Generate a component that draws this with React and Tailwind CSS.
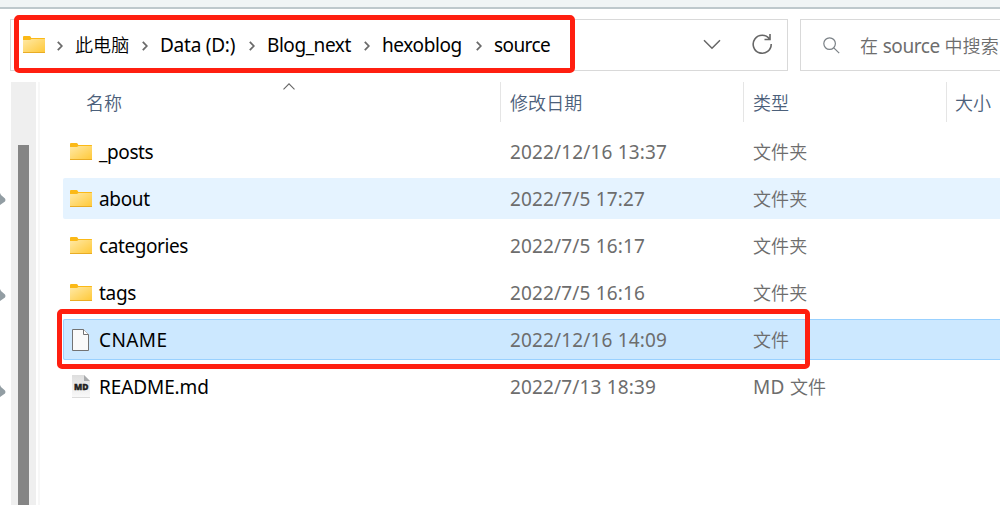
import React from "react";

const CJK = "text-[18px] font-[350] tracking-[0.1px] font-['Noto_Sans_CJK_SC_DemiLight','Noto_Sans_CJK_SC',sans-serif]";

function Label({ text, className = "" }) {
  const parts = text.split(/([\u4e00-\u9fff]+)/).filter(Boolean);
  return (
    <span className={`block whitespace-pre leading-[26px] ${className}`}>
      {parts.map((part, i) =>
        /[\u4e00-\u9fff]/.test(part) ? (
          <span key={i} className={CJK}>{part}</span>
        ) : (
          <span key={i}>{part}</span>
        )
      )}
    </span>
  );
}

function Folder() {
  return (
    <svg width="22" height="17" viewBox="0 0 22 17" className="block shrink-0">
      <defs>
        <linearGradient id="folder" x1="0" y1="0" x2="1" y2="1">
          <stop offset="0" stopColor="#ffe9a6" />
          <stop offset="1" stopColor="#ffc836" />
        </linearGradient>
      </defs>
      <path d="M0 1Q0 0 1 0H6.5Q7.3 0 7.8 1L8.3 2H21.5Q22 2 22 2.5V6H0Z" fill="#fbb917" />
      <path d="M0 4H7L8.5 3H22V17H0Z" fill="url(#folder)" />
      <path d="M0 16.5H22" stroke="#e9ac24" />
    </svg>
  );
}

function Page() {
  return (
    <svg width="17" height="22" viewBox="0 0 17 22" className="block shrink-0">
      <path d="M.5.5H11.5L16.5 5.5V21.5H.5Z" fill="#fafafa" stroke="#737373" />
      <path d="M11.5.5V5.5H16.5" fill="#fff" stroke="#737373" />
    </svg>
  );
}

function Markdown() {
  return (
    <svg width="18" height="23" viewBox="0 0 18 23" className="block shrink-0">
      <defs>
        <linearGradient id="sheet" x1="0" y1="0" x2="0" y2="1">
          <stop offset="0" stopColor="#dedede" />
          <stop offset="1" stopColor="#fafafa" />
        </linearGradient>
      </defs>
      <path d="M0 0H12L18 6V23H0Z" fill="url(#sheet)" />
      <path d="M12 0L18 6H12Z" fill="#a9abad" />
      <path d="M0 22.5H18" stroke="#dcdcdc" />
      <text x="9.2" y="15.2" textAnchor="middle" textLength="14.5" lengthAdjust="spacingAndGlyphs" fontFamily="Open Sans, sans-serif" fontWeight="800" fontSize="9" fill="#222" stroke="#222" strokeWidth=".4">MD</text>
    </svg>
  );
}

function Crumb({ text, width, className = "" }) {
  return (
    <li className={`flex shrink-0 items-center ${width}`}>
      <svg width="6" height="10" viewBox="0 0 6 10" className="mt-[2px] mr-[12px] block shrink-0" fill="none" stroke="#6a6a6a" strokeWidth="1.8">
        <path d="M.8.8L4.8 5L.8 9.2" />
      </svg>
      <Label text={text} className={className} />
    </li>
  );
}

const files = [
  { name: "_posts", date: "2022/12/16 13:37", type: "文件夹", icon: "folder", track: "tracking-[-0.4px]" },
  { name: "about", date: "2022/7/5 17:27", type: "文件夹", icon: "folder", track: "tracking-[-0.35px]", row: "rounded-l-[2px] bg-[#e5f3ff]" },
  { name: "categories", date: "2022/7/5 16:17", type: "文件夹", icon: "folder", track: "tracking-[-0.42px]" },
  { name: "tags", date: "2022/7/5 16:16", type: "文件夹", icon: "folder", track: "tracking-[-0.3px]" },
  { name: "CNAME", date: "2022/12/16 14:09", type: "文件", icon: "page", track: "tracking-[0.4px]", row: "rounded-l-[2px] bg-[#cce8ff] shadow-[inset_0_0_0_1px_#99d1ff]" },
  { name: "README.md", date: "2022/7/13 18:39", type: "MD 文件", icon: "md", track: "tracking-[-0.1px]" },
];

function Row({ file }) {
  return (
    <div className={`flex h-[41px] w-[945px] shrink-0 items-center ${file.row || ""}`}>
      <div className="flex w-9 shrink-0 items-center pl-[7px]">
        {file.icon === "folder" && <Folder />}
        {file.icon === "page" && <div className="pt-px pl-[2px]"><Page /></div>}
        {file.icon === "md" && <div className="pl-[2px]"><Markdown /></div>}
      </div>
      <div className="w-[411px] shrink-0"><Label text={file.name} className={`text-black ${file.track}`} /></div>
      <div className="w-[243px] shrink-0"><Label text={file.date} className="tracking-[0.15px] text-[#6d6d6d]" /></div>
      <Label text={file.type} className="tracking-[0.3px] text-[#6d6d6d]" />
    </div>
  );
}

function Pin({ className }) {
  return (
    <svg width="6" height="16" viewBox="0 0 6 16" className={`absolute left-0 ${className}`}>
      <path d="M0 1L1 3L5 6.5Q6 8 5 9.5L0 13Z" fill="#929da3" />
    </svg>
  );
}

export default function App() {
  return (
    <div className="relative flex h-[505px] w-[1000px] flex-col overflow-hidden bg-white font-['Noto_Sans',sans-serif] text-[19px]">
      <div className="h-[9px] shrink-0 border-b-2 border-[#bec8cc] bg-[#f0f4f5]" />

      <div className="flex shrink-0 gap-3 pt-[10px] pl-[10px]">
        <div className="flex h-[52px] w-[778px] shrink-0 items-center border border-[#d9d9d9] pl-3">
          <div className="mr-[12px] -mt-[2px]"><Folder /></div>
          <ol className="flex grow pb-px">
            <Crumb text="此电脑" width="w-[85px]" />
            <Crumb text="Data (D:)" width="w-[107px]" className="tracking-[-0.25px]" />
            <Crumb text="Blog_next" width="w-[115px]" className="tracking-[-0.45px]" />
            <Crumb text="hexoblog" width="w-[112px]" className="tracking-[-0.4px]" />
            <Crumb text="source" width="w-[100px]" className="tracking-[-0.6px]" />
          </ol>
          <svg width="18" height="11" viewBox="0 0 18 11" className="mr-[30px] -mt-px block shrink-0" fill="none" stroke="#666" strokeWidth="1.5">
            <path d="M1 1.2L9 9.2L17 1.2" />
          </svg>
          <svg width="22" height="22" viewBox="0 0 22 22" className="mr-[14px] -mt-[2px] block shrink-0" fill="none" stroke="#666" strokeWidth="1.6">
            <path d="M18.5 6A9 9 0 1 0 20.2 11M19 1V6.5H13.5" />
          </svg>
        </div>
        <div className="flex h-[52px] w-[200px] shrink-0 items-center border border-r-0 border-[#d9d9d9] pl-[22px]">
          <svg width="17" height="17" viewBox="0 0 17 17" className="mr-[20px] block shrink-0" fill="none" stroke="#7a8086" strokeWidth="1.2">
            <circle cx="6.6" cy="6.6" r="5.8" />
            <path d="M10.8 10.8L16.2 16.2" />
          </svg>
          <Label text="在 source 中搜索" className="tracking-[-0.4px] text-[#6d6d6d]" />
        </div>
      </div>

      <div className="flex grow pt-[11px]">
        <aside className="relative flex w-10 shrink-0 justify-between pl-[11px]">
          <Pin className="top-[110px]" />
          <Pin className="top-[206px]" />
          <Pin className="top-[302px]" />
          <div className="w-[25px] bg-[#efefef] pt-[63px] pl-[7px]">
            <div className="h-[360px] w-[11px] bg-[#858585]" />
          </div>
          <div className="w-[2px] bg-[#f7f7f7]" />
        </aside>
        <main className="flex flex-col pl-[23px]">
          <div className="relative flex h-10 shrink-0 items-center text-[#4c607a]">
            <div className="w-[437px] pl-[23px]"><Label text="名称" /></div>
            <div className="flex h-10 w-[243px] items-center border-l border-[#e5e5e5] pl-[9px]"><Label text="修改日期" /></div>
            <div className="flex h-10 w-[203px] items-center border-l border-[#e5e5e5] pl-[9px]"><Label text="类型" /></div>
            <div className="flex h-10 items-center border-l border-[#e5e5e5] pl-[8px]"><Label text="大小" /></div>
            <svg width="12" height="7" viewBox="0 0 12 7" className="absolute top-[1px] left-[220px]" fill="none" stroke="#666" strokeWidth="1.1">
              <path d="M.5 6.3L6 .8L11.5 6.3" />
            </svg>
          </div>
          <div className="flex flex-col gap-[6px] pt-[9px]">
            {files.map((file) => <Row key={file.name} file={file} />)}
          </div>
        </main>
      </div>

      <div className="absolute top-[15px] left-[14px] h-[58px] w-[561px] rounded-[5px] border-[5px] border-[#ff1f10]" />
      <div className="absolute top-[309px] left-[57px] h-[60px] w-[753px] rounded-[5px] border-[5px] border-[#ff1f10]" />
    </div>
  );
}
